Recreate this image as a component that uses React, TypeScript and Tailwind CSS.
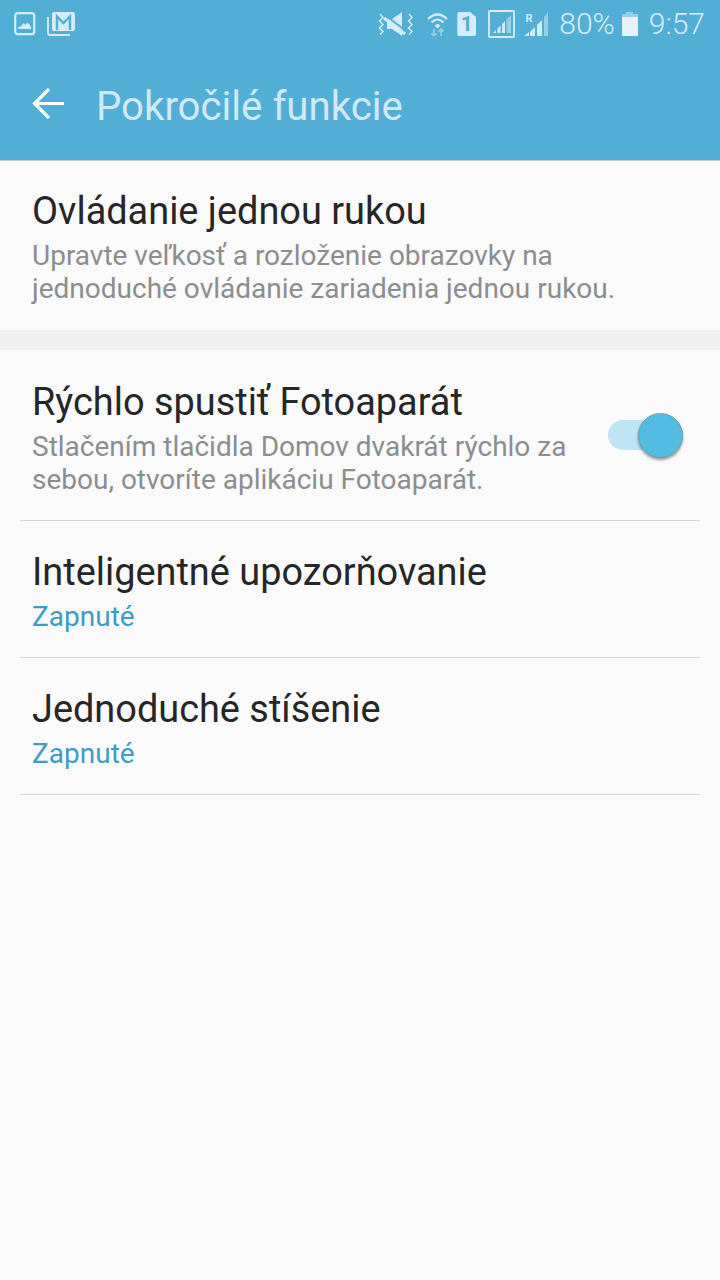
const ROBOTO = { fontFamily: 'Roboto, sans-serif' };

function StatusLeft() {
  return (
    <div className="flex items-center gap-[11px]">
      <svg width="22" height="24" viewBox="0 0 22 24" className="text-[#d4edf8]">
        <rect x="1.2" y="1.2" width="19" height="21" rx="2.5" fill="none" stroke="currentColor" strokeWidth="2.2" />
        <path d="M4.5 17 v-2 l3-1 2-3 2 2 1.5-2.5 2 1.5 2 3 v2 z" fill="currentColor" />
      </svg>
      <svg width="29" height="24" viewBox="0 0 29 24" className="text-[#d4edf8]">
        <path d="M1 5 v16 q0 2 2 2 h20" fill="none" stroke="currentColor" strokeWidth="1.8" />
        <rect x="5" y="0" width="23" height="19" rx="2" fill="currentColor" />
        <path d="M10 18 V4.5 L16.5 11 L23 4.5 V18" fill="none" stroke="#52aed5" strokeWidth="2.4" />
      </svg>
    </div>
  );
}

function StatusRight() {
  return (
    <div className="flex items-center text-[#d4edf8]">
      <svg width="36" height="24" viewBox="0 0 36 24">
        <path d="M3 2 l3 3.5 -3.5 3.5 3.5 3.5 -3.5 3.5 3.5 3.5 -3 3" fill="none" stroke="currentColor" strokeWidth="1.5" />
        <path d="M32 2 l3 3.5 -3.5 3.5 3.5 3.5 -3.5 3.5 3.5 3.5 -3 3" fill="none" stroke="currentColor" strokeWidth="1.5" />
        <path d="M10 7 h5 l10 -7 v24 l-10 -7 h-5 z" fill="currentColor" />
        <path d="M7 6 L28 22" stroke="currentColor" strokeWidth="3" />
        <path d="M8 3 L29 19" stroke="#52aed5" strokeWidth="2" />
      </svg>
      <svg width="21" height="24" viewBox="0 0 21 24" className="ml-[14px]">
        <path d="M1 7 Q10.5 -2 20 7" fill="none" stroke="currentColor" strokeWidth="2.2" />
        <path d="M4.5 10.5 Q10.5 4.5 16.5 10.5" fill="none" stroke="currentColor" strokeWidth="2.2" />
        <path d="M7.5 13.5 Q10.5 10.5 13.5 13.5 L10.5 16.5 z" fill="currentColor" />
        <path d="M7 17 v7 m-2.5 -2.5 l2.5 2.5 2.5 -2.5" fill="none" stroke="#95cfe6" strokeWidth="1.8" />
        <path d="M14 24 v-7 m-2.5 2.5 l2.5 -2.5 2.5 2.5" fill="none" stroke="#95cfe6" strokeWidth="1.8" />
      </svg>
      <div className="ml-[9px] w-[19px] h-[24px] rounded-[2px] bg-[#d4edf8] [clip-path:polygon(0_0,68%_0,100%_22%,100%_100%,0_100%)] flex items-center justify-center text-[#52aed5] text-[21px] font-bold leading-none" style={ROBOTO}>
        1
      </div>
      <svg width="27" height="28" viewBox="0 0 27 28" className="ml-[12px]">
        <rect x="1" y="1" width="25" height="26" rx="1" fill="none" stroke="currentColor" strokeWidth="1.8" />
        <path d="M5 23 h3 v-3z M9.5 23 h3 v-7.5 l-3 3z M14 23 h3 v-12 l-3 3z" fill="currentColor" />
        <path d="M18.5 23 h4.5 v-18 l-4.5 4.5z" fill="#95cfe6" />
      </svg>
      <svg width="25" height="24" viewBox="0 0 25 24" className="ml-[9px]">
        <text x="1.5" y="10" fontSize="11" fontWeight="700" fill="currentColor" fontFamily="Roboto, sans-serif">R</text>
        <path d="M0 24 h5 v-4 z M6 24 h5 v-9 l-5 5z M13 24 h5 v-16 l-5 5z" fill="currentColor" />
        <path d="M20 24 h4 V0 l-4 5z" fill="#95cfe6" />
      </svg>
      <span className="ml-[10px] text-[30px] leading-none font-light" style={ROBOTO}>80%</span>
      <div className="ml-[7px] w-[16px] h-[24px] flex flex-col items-center">
        <div className="w-[7px] h-[2px] bg-[#95cfe6]" />
        <div className="w-full h-[3px] bg-[#95cfe6]" />
        <div className="w-full flex-1 bg-[#e4f3fa]" />
      </div>
      <span className="ml-[11px] text-[30px] leading-none font-light" style={ROBOTO}>9:57</span>
    </div>
  );
}

function Row({ title, sub, accent, toggle, divider, h, pt, gap }: { title: string; sub: string[]; accent?: boolean; toggle?: boolean; divider?: boolean; h: string; pt: string; gap: string }) {
  return (
    <div className={`${h} ${pt} mx-[20px] px-[12px] flex items-start justify-between ${divider ? 'border-b border-[#d6d6d6]' : ''}`}>
      <div>
        <div className="text-[37.9px] leading-[44px] text-[#262626]">{title}</div>
        <div className={`text-[28px] leading-[33px] ${gap} ${accent ? 'text-[#3f9cc2]' : 'text-[#8b8e90]'}`}>
          {sub.map(s => <div key={s}>{s}</div>)}
        </div>
      </div>
      {toggle && (
        <div className="relative w-[75px] h-[30px] mt-[40px] mr-[5px] rounded-full bg-[#bfe5f4] shrink-0">
          <div className="absolute right-0 top-[-7px] w-[45px] h-[45px] rounded-full bg-[#52bce3] border border-[#6f9fb3] shadow-[0_2px_3px_rgba(0,0,0,0.4)]" />
        </div>
      )}
    </div>
  );
}

export default function App() {
  return (
    <div className="w-[720px] h-[1280px] bg-[#fafafa] overflow-hidden" style={ROBOTO}>
      <div className="h-[161px] bg-[#52aed5] border-b border-[#c9c9c9]">
        <div className="h-[48px] pl-[14px] pr-[15px] flex items-center justify-between">
          <StatusLeft />
          <StatusRight />
        </div>
        <div className="flex items-center h-[112px] pl-[32px]">
          <svg width="34" height="34" viewBox="0 0 34 34">
            <path d="M2 16.5 H32 M17 2 L2.5 16.5 L17 31" fill="none" stroke="white" strokeWidth="3.2" />
          </svg>
          <span className="ml-[30px] mt-[6px] text-[40.2px] text-[#cfe9f5]">Pokročilé funkcie</span>
        </div>
      </div>

      <Row h="h-[169px]" pt="pt-[28px]" gap="mt-[6px]" title="Ovládanie jednou rukou" sub={['Upravte veľkosť a rozloženie obrazovky na', 'jednoduché ovládanie zariadenia jednou rukou.']} />
      <div className="h-[20px] bg-[#f0f0f0]" />
      <Row h="h-[171px]" pt="pt-[30px]" gap="mt-[6px]" divider toggle title="Rýchlo spustiť Fotoaparát" sub={['Stlačením tlačidla Domov dvakrát rýchlo za', 'sebou, otvoríte aplikáciu Fotoaparát.']} />
      <Row h="h-[137px]" pt="pt-[29px]" gap="mt-[6px]" divider accent title="Inteligentné upozorňovanie" sub={['Zapnuté']} />
      <Row h="h-[137px]" pt="pt-[29px]" gap="mt-[6px]" divider accent title="Jednoduché stíšenie" sub={['Zapnuté']} />
    </div>
  );
}
